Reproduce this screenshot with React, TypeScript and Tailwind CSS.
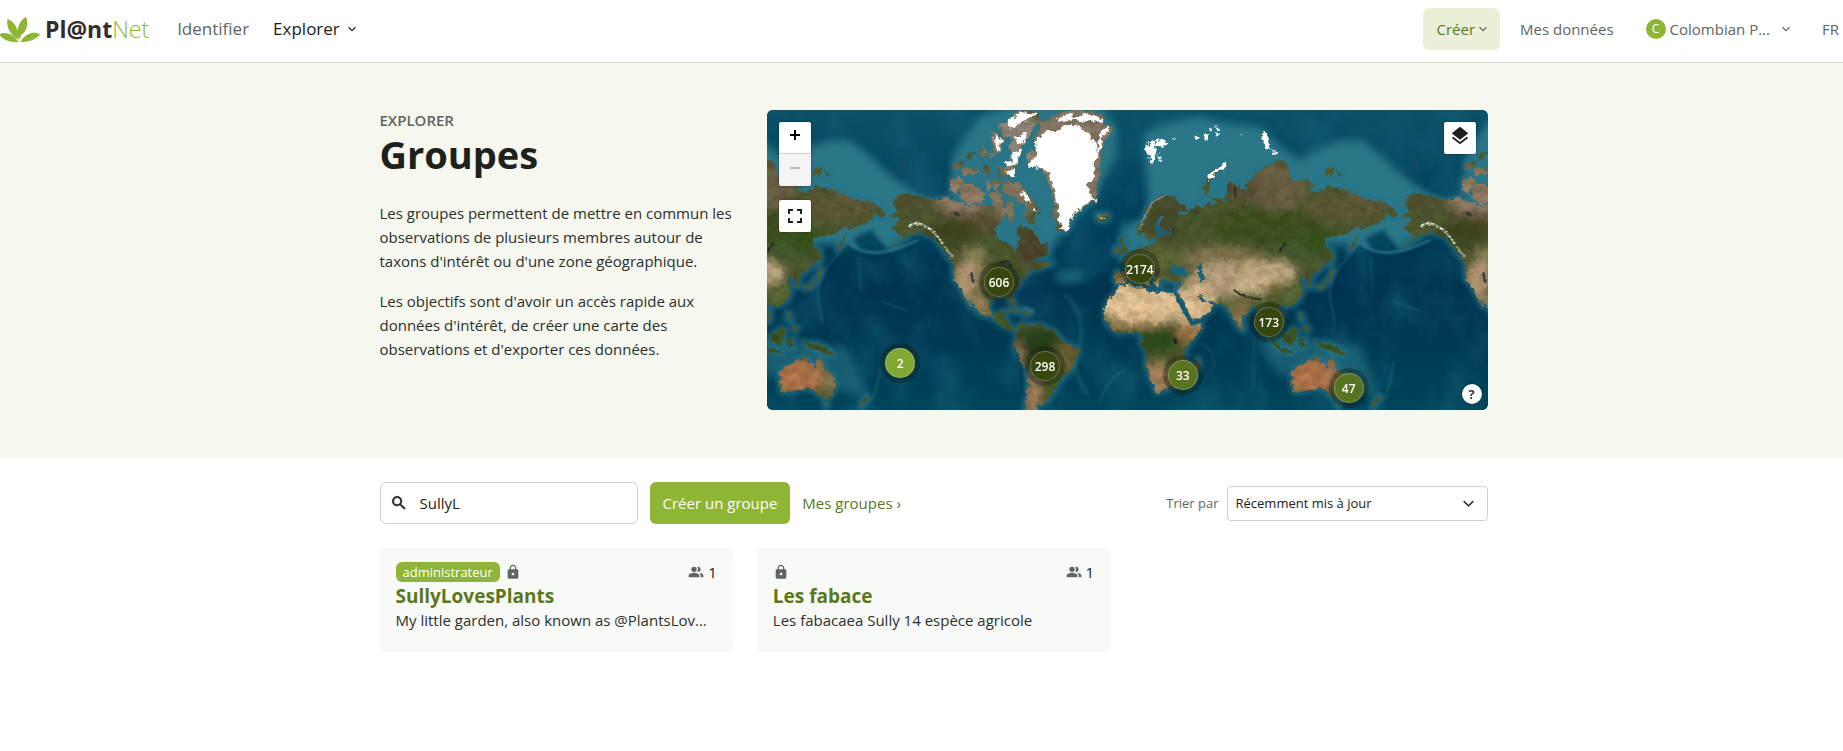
import { useState, type ReactNode } from 'react';

type Cluster = { count: number; x: number; y: number; tone: string };

const MAP_W = 721;
const MAP_H = 300;

const clusters: Cluster[] = [
  { count: 606, x: 232, y: 172, tone: 'bg-[#37450f]' },
  { count: 2174, x: 373, y: 159, tone: 'bg-[#37450f]' },
  { count: 173, x: 502, y: 212, tone: 'bg-[#37450f]' },
  { count: 298, x: 278, y: 256, tone: 'bg-[#37450f]' },
  { count: 33, x: 416, y: 265, tone: 'bg-[#597420]' },
  { count: 47, x: 582, y: 278, tone: 'bg-[#597420]' },
  { count: 2, x: 133, y: 253, tone: 'bg-[#82a733]' },
];

const groups = [
  { name: 'SullyLovesPlants', text: 'My little garden, also known as @PlantsLov...', admin: true, members: 1 },
  { name: 'Les fabace', text: 'Les fabacaea Sully 14 espèce agricole', admin: false, members: 1 },
];

function Chevron({ className }: { className: string }) {
  return (
    <svg viewBox="0 0 16 16" className={className} fill="none" stroke="currentColor" strokeWidth="2.4" aria-hidden="true">
      <path d="M1 4.5 8 11.5l7-7" />
    </svg>
  );
}

function LockIcon() {
  return (
    <svg viewBox="0 0 24 24" className="size-4 text-[#5f655f]" fill="currentColor" aria-hidden="true">
      <path d="M18 8h-1V6c0-2.76-2.24-5-5-5S7 3.24 7 6v2H6c-1.1 0-2 .9-2 2v10c0 1.1.9 2 2 2h12c1.1 0 2-.9 2-2V10c0-1.1-.9-2-2-2zm-6 9c-1.1 0-2-.9-2-2s.9-2 2-2 2 .9 2 2-.9 2-2 2zm3.1-9H8.9V6c0-1.71 1.39-3.1 3.1-3.1 1.71 0 3.1 1.39 3.1 3.1v2z" />
    </svg>
  );
}

function PeopleIcon() {
  return (
    <svg viewBox="0 0 24 24" className="size-4 text-[#5f655f]" fill="currentColor" aria-hidden="true">
      <path d="M16.67 13.13C18.04 14.06 19 15.32 19 17v3h4v-3c0-2.18-3.57-3.47-6.33-3.87z" />
      <circle cx="9" cy="8" r="4" />
      <path d="M15 12c2.21 0 4-1.79 4-4s-1.79-4-4-4c-.47 0-.91.1-1.33.24C14.5 5.27 15 6.58 15 8s-.5 2.73-1.33 3.76c.42.14.86.24 1.33.24zM9 13c-2.67 0-8 1.34-8 4v3h16v-3c0-2.66-5.33-4-8-4z" />
    </svg>
  );
}

function SearchIcon() {
  return (
    <svg viewBox="0 0 24 24" className="size-[18px] shrink-0" fill="currentColor" stroke="currentColor" strokeWidth=".6" aria-hidden="true">
      <path d="M15.5 14h-.79l-.28-.27C15.41 12.59 16 11.11 16 9.5 16 5.91 13.09 3 9.5 3S3 5.91 3 9.5 5.91 16 9.5 16c1.61 0 3.09-.59 4.23-1.57l.27.28v.79l5 4.99L20.49 19l-4.99-5zm-6 0C7.01 14 5 11.99 5 9.5S7.01 5 9.5 5 14 7.01 14 9.5 11.99 14 9.5 14z" />
    </svg>
  );
}

function Logo() {
  return (
    <a href="#accueil" className="flex items-center gap-1" aria-label="Pl@ntNet">
      <svg viewBox="0 0 124 82" className="h-[27px] w-[41px]" fill="#8eb533" aria-hidden="true">
        <path d="M22 9C38 14 57 32 56 72 36 61 18 40 22 9z" />
        <path d="M79 2C85 22 83 38 73 50 66 55 61 62 60 72 52 58 50 47 55 34 58 21 66 9 79 2z" />
        <path d="M0 55C18 46 40 56 56 79 36 82 14 75 0 60z" />
        <path d="M122 56C106 46 78 48 62 79 86 80 106 72 122 56z" />
      </svg>
      <span className="text-[23px] leading-8 font-bold text-[#332b2d]">
        Pl@nt<span className="font-light text-[#8eb533]">Net</span>
      </span>
    </a>
  );
}

const northAmerica =
  'M398 312 415 285 440 280 480 290 520 300 560 292 590 305 620 318 660 315 700 322 740 325 735 350 715 375 705 400 712 420 740 425 755 440 765 462 773 440 778 420 770 395 780 375 800 385 825 395 835 415 865 440 870 460 840 475 820 490 852 482 880 488 845 505 815 510 800 525 785 540 775 560 757 575 760 595 767 622 756 612 745 592 725 588 700 595 690 605 688 630 700 645 720 640 728 630 737 640 728 655 745 660 748 675 765 688 758 692 735 680 700 655 660 640 650 622 625 592 612 570 640 622 632 620 600 562 583 540 580 515 582 490 560 465 545 440 520 410 490 400 460 397 435 418 390 440 440 408 410 400 400 375 415 355 392 348 415 335Z';
const southAmerica =
  'M770 690 785 672 810 675 840 675 870 685 890 695 900 715 925 735 955 745 958 760 940 790 935 815 915 830 895 850 880 880 860 905 835 915 830 940 795 940 800 880 805 840 800 805 785 785 768 755 762 735 770 715 775 700Z';
const caribbean = 'M735 632 760 626 785 632 780 638 755 636ZM790 634 812 637 806 644 790 642Z';
const arcticIslands =
  'M178 65 200 50 235 20 270 18 300 28 305 45 285 70 270 95 250 120 240 150 232 182 215 185 220 150 205 130 215 100 190 95ZM160 78 180 95 190 120 185 145 165 140 155 110ZM185 235 210 228 240 235 262 265 280 285 300 320 285 330 290 362 262 350 250 330 268 312 242 288 215 270 190 265ZM65 242 100 235 122 255 137 268 130 290 90 300 60 280ZM35 220 70 220 72 235 50 268 33 255ZM118 128 132 126 143 150 132 155 120 142ZM148 140 160 142 163 160 150 155ZM42 178 60 165 74 170 68 185 48 195ZM80 150 98 138 98 162 84 165ZM66 192 112 188 116 205 80 212 66 204ZM130 182 148 180 152 208 136 210ZM172 186 218 182 228 200 222 216 178 214ZM135 225 152 230 154 256 138 260ZM158 225 182 228 176 255 160 250ZM152 260 178 258 190 290 186 310 160 305ZM198 290 220 292 222 345 208 355 200 330ZM35 288 75 292 78 305 40 302Z';
const arcticIce =
  'M205 48 245 22 290 26 262 45 235 60 215 72ZM225 95 262 84 252 112 236 120ZM218 140 246 132 234 178 220 172ZM165 90 182 100 184 140 170 130ZM200 198 226 196 226 212 204 214ZM246 258 262 272 276 292 262 288 248 272ZM275 305 296 318 285 322ZM188 172 214 168 230 178 205 184Z';
const greenland =
  'M258 150 290 130 280 100 300 75 305 50 330 45 350 30 380 18 420 18 460 20 485 30 492 60 515 65 517 80 490 110 485 150 480 215 475 240 470 270 465 290 440 300 400 330 385 375 375 382 355 370 340 320 345 290 325 225 300 185 270 185 260 165Z';
const greenlandIce =
  'M285 105 322 78 350 78 382 60 412 60 450 85 467 110 473 150 462 180 466 215 445 235 448 260 467 285 435 300 402 325 385 372 376 380 360 358 352 300 340 240 325 205 305 185 270 190 267 175 292 152ZM350 40 390 26 410 38 440 24 482 36 486 56 455 45 430 50 400 42 370 52ZM488 72 512 66 505 82 484 98 482 140 472 150 476 110Z';
const iceland = 'M470 325 482 328 505 324 509 340 490 352 472 342Z';
const eurasia =
  'M-12 515 -14 548 -5 554 15 550 24 538 30 530 45 528 62 535 85 560 92 552 72 525 95 530 105 548 118 560 125 555 118 540 140 535 155 545 178 545 182 552 175 578 195 610 212 645 220 662 250 650 275 630 281 615 262 605 250 610 238 595 230 583 245 590 260 605 290 608 315 612 325 630 340 650 358 682 366 686 370 655 374 645 395 625 410 618 420 635 435 650 440 680 455 700 467 713 462 690 450 660 470 670 487 665 491 640 480 628 490 618 520 615 540 600 550 575 545 550 538 540 555 530 565 545 568 562 580 560 572 540 590 520 612 500 632 475 636 450 615 440 610 415 640 410 680 400 710 385 728 380 715 410 700 440 690 455 696 422 720 398 745 378 770 372 795 355 800 335 830 357 836 345 820 325 780 305 740 300 700 280 660 265 620 260 590 278 570 270 580 255 555 240 512 240 510 200 480 180 450 195 400 225 395 240 375 255 380 275 345 248 320 255 318 300 275 292 290 308 250 315 235 320 215 325 200 342 182 345 175 330 200 335 195 315 170 305 155 285 125 285 100 300 80 330 75 355 50 380 55 405 75 400 85 428 100 420 112 395 104 375 125 345 132 350 120 375 130 395 162 390 150 402 118 405 110 430 80 438 60 445 40 452 22 470 5 482 25 490 22 515Z';
const seas =
  'M148 510 162 498 175 502 184 496 206 515 198 528 160 526ZM232 498 252 490 247 508 259 540 246 552 236 534 240 515ZM158 545 180 545 175 578 162 572Z';
const africa =
  'M178 232 205 225 250 225 258 240 285 250 305 240 345 252 352 262 358 285 375 310 395 340 405 345 427 340 425 352 400 390 380 410 375 430 385 455 370 490 350 520 320 540 290 548 284 530 270 500 258 465 262 430 245 400 248 380 235 368 200 365 175 370 150 350 138 335 135 300 145 275 165 250Z';
const britain = 'M180 85 195 82 190 100 206 122 195 130 178 132 186 112ZM164 115 176 110 178 126 166 132ZM415 445 421 460 406 496 399 480ZM546 350 554 352 552 364Z';
const eastIslands =
  'M440 700 465 720 485 742 478 746 455 722ZM474 746 522 753 520 760 478 753ZM490 705 515 688 532 690 530 715 515 735 495 727ZM538 720 560 716 548 724 560 742 550 738 542 745ZM586 724 602 730 620 728 650 740 678 764 650 760 625 752 602 742ZM540 640 550 645 548 662 540 658ZM558 675 570 685 564 694 555 686ZM638 505 644 512 636 535 612 562 590 566 612 548 628 528ZM632 450 638 448 641 482 636 498ZM775 888 788 895 772 910 756 928 764 905ZM650 910 662 912 655 924Z';
const australia =
  'M513 820 525 805 545 795 570 780 590 772 605 775 600 790 625 800 635 770 645 785 655 810 680 835 683 860 670 890 655 897 640 890 620 870 605 866 580 865 545 875 522 875 518 850Z';
const novaya = 'M250 265 262 235 290 205 320 190 322 198 292 220 272 242 268 275 258 285ZM615 208 640 206 642 224 620 228ZM650 216 668 222 660 228Z';
const polarIce =
  'M73 135 88 128 84 140 100 125 112 135 106 158 102 190 94 190 88 165 78 158ZM106 122 125 116 144 126 130 140 112 136ZM118 158 128 180 116 176ZM424 100 440 98 450 130 452 148 438 148 430 125ZM455 148 476 158 458 164ZM262 84 278 86 272 96ZM285 96 305 100 290 110ZM225 108 238 104 240 116 226 118ZM250 104 272 102 262 122 252 116ZM268 240 262 250 270 228 292 205 320 190 320 200 290 218ZM288 80 296 78 296 90ZM160 116 170 118 166 124ZM364 100 370 104 364 106Z';

function Blob({ cx, cy, rx, ry, fill, o = 1 }: { cx: number; cy: number; rx: number; ry: number; fill: string; o?: number }) {
  return <ellipse cx={cx} cy={cy} rx={rx} ry={ry} fill={fill} opacity={o} />;
}

function LandShapes() {
  return (
    <>
      <path transform="translate(-21 -30)" d={northAmerica + southAmerica + caribbean} />
      <path transform="translate(519 -15)" d={arcticIslands + iceland} />
      <path transform="translate(519 -15)" d={greenland} />
      <path transform="translate(1059 -30)" d={eurasia} />
      <path transform="translate(1059 -30)" d={eastIslands + australia + novaya} />
      <path transform="translate(879 300)" d={africa + britain} />
    </>
  );
}

function Ocean() {
  return (
    <g id="ocean">
      <g filter="url(#soft30)">
        <path fill="#2c7788" d="M1130 70 1200 40 1300 20 1380 40 1480 50 1540 110 1600 150 1660 115 1720 92 1790 95 1850 140 1900 190 1960 235 2030 300 1900 420 1700 400 1150 330Z" />
        <path fill="#2c7788" d="M560 130 640 20 760 -20 1000 -10 1050 60 1045 150 1000 220 940 300 850 420 700 430 560 300Z" />
        <path fill="#2c7788" d="M1060 350 1130 330 1180 420 1080 440Z" />
        <path fill="#256f84" d="M1470 690 1780 710 1840 860 1750 840 1640 760 1540 800Z" opacity=".6" />
        <ellipse cx="910" cy="500" rx="50" ry="20" fill="#256f84" opacity=".7" />
      </g>
      <g filter="url(#soft10)" stroke="#2b7487" strokeWidth="20" strokeLinejoin="round" fill="#2b7487" opacity=".65">
        <LandShapes />
      </g>
      <g filter="url(#soft10)">
        <path fill="#00405a" d="M1795 385 1850 360 1905 425 1830 432Z" opacity=".9" />
        <path fill="#0a4a63" d="M1920 130 1950 120 1965 170 1940 210 1922 190Z" opacity=".7" />
      </g>
      <g filter="url(#soft4)" fill="none" stroke="#3a8698" strokeLinecap="round">
        <path d="M1786 400Q1850 460 1990 390" strokeWidth="5" />
        <path d="M1770 410Q1710 480 1695 500L1690 560 1705 640" strokeWidth="4" opacity=".5" />
        <path d="M1812 440 1818 540M1880 575 1958 602" strokeWidth="4" opacity=".4" />
        <path d="M1884 755 1858 860" strokeWidth="4" opacity=".5" />
        <path d="M1310 700Q1370 750 1320 800M1462 640 1460 840" strokeWidth="4" opacity=".35" />
        <path d="M900 560Q960 620 940 700Q900 760 960 850" strokeWidth="18" opacity=".18" />
        <path d="M1080 780Q1020 800 1000 880" strokeWidth="6" opacity=".3" />
        <path d="M770 590 800 605" strokeWidth="6" opacity=".8" />
      </g>
      <g filter="url(#soft4)" fill="none" stroke="#002f49" strokeLinecap="round" opacity=".7">
        <path d="M1778 412Q1850 474 1985 404M1778 412Q1705 490 1700 560L1716 650" strokeWidth="4" />
        <path d="M740 690 765 780 770 860" strokeWidth="6" />
      </g>
    </g>
  );
}

function Land() {
  return (
    <g id="land">
      <g filter="url(#coast)">
        <g clipPath="url(#landclip)">
          <rect x="-60" y="-40" width="2300" height="1000" fill="#4f5a31" />
          <g filter="url(#soft20)">
            {/* North America */}
            <Blob cx={420} cy={285} rx={70} ry={30} fill="#535431" />
            <Blob cx={620} cy={325} rx={110} ry={40} fill="#5c5538" />
            <Blob cx={560} cy={370} rx={80} ry={40} fill="#3f4a22" />
            <Blob cx={640} cy={410} rx={60} ry={24} fill="#47582a" />
            <Blob cx={625} cy={450} rx={36} ry={45} fill="#8c8559" />
            <Blob cx={600} cy={510} rx={38} ry={60} fill="#b79a75" />
            <Blob cx={720} cy={510} rx={50} ry={50} fill="#3c5123" />
            <Blob cx={640} cy={590} rx={30} ry={30} fill="#a88c63" />
            <Blob cx={710} cy={630} rx={35} ry={20} fill="#3f5a22" />
            <Blob cx={800} cy={410} rx={50} ry={60} fill="#50472e" />
            <Blob cx={590} cy={240} rx={100} ry={70} fill="#957f6a" />
            <Blob cx={740} cy={260} rx={60} ry={80} fill="#8a7a65" />
            <Blob cx={740} cy={90} rx={100} ry={90} fill="#968a7c" />
            <Blob cx={930} cy={150} rx={130} ry={200} fill="#8b7d6b" />
            {/* South America */}
            <Blob cx={810} cy={700} rx={80} ry={45} fill="#25431a" />
            <Blob cx={900} cy={740} rx={40} ry={50} fill="#6a6433" />
            <Blob cx={860} cy={830} rx={45} ry={40} fill="#4a5c26" />
            <Blob cx={800} cy={860} rx={24} ry={70} fill="#a98464" />
            <Blob cx={755} cy={740} rx={14} ry={50} fill="#9a7c55" />
            {/* Europe and Asia */}
            <Blob cx={1220} cy={330} rx={90} ry={60} fill="#474e2f" />
            <Blob cx={1330} cy={350} rx={120} ry={50} fill="#48592e" />
            <Blob cx={1500} cy={350} rx={160} ry={60} fill="#405222" />
            <Blob cx={1530} cy={230} rx={90} ry={70} fill="#6e6347" />
            <Blob cx={1740} cy={290} rx={130} ry={45} fill="#5f5c39" />
            <Blob cx={1430} cy={240} rx={50} ry={40} fill="#5b5035" />
            <Blob cx={1180} cy={450} rx={90} ry={40} fill="#5d6635" />
            <Blob cx={1360} cy={440} rx={120} ry={28} fill="#8b7d57" />
            <Blob cx={1370} cy={510} rx={110} ry={50} fill="#bda582" />
            <Blob cx={1500} cy={490} rx={90} ry={42} fill="#cbb28a" />
            <Blob cx={1470} cy={535} rx={70} ry={20} fill="#d2bb93" />
            <Blob cx={1610} cy={420} rx={70} ry={40} fill="#455c2d" />
            <Blob cx={1660} cy={390} rx={50} ry={40} fill="#37551f" />
            <Blob cx={1570} cy={550} rx={40} ry={40} fill="#5c6a38" />
            <Blob cx={1520} cy={535} rx={24} ry={18} fill="#71631f" />
            <Blob cx={1420} cy={600} rx={40} ry={40} fill="#7d7347" />
            <Blob cx={1415} cy={640} rx={22} ry={30} fill="#9a7750" />
            <Blob cx={1500} cy={620} rx={50} ry={40} fill="#3e5a24" />
            <Blob cx={1280} cy={590} rx={70} ry={60} fill="#e6c495" />
            <Blob cx={1070} cy={510} rx={30} ry={20} fill="#92794d" />
            {/* Africa */}
            <Blob cx={1130} cy={580} rx={140} ry={62} fill="#edcb9c" />
            <Blob cx={1100} cy={645} rx={100} ry={12} fill="#a18050" />
            <Blob cx={1060} cy={668} rx={60} ry={14} fill="#4a5726" />
            <Blob cx={1175} cy={690} rx={70} ry={38} fill="#2f501a" />
            <Blob cx={1270} cy={670} rx={40} ry={34} fill="#a3794a" />
            <Blob cx={1190} cy={760} rx={60} ry={30} fill="#55602d" />
            <Blob cx={1170} cy={810} rx={50} ry={50} fill="#ac8860" />
            <Blob cx={1230} cy={800} rx={30} ry={40} fill="#65633a" />
            <Blob cx={1290} cy={770} rx={14} ry={30} fill="#6d4d2b" />
            {/* Oceania */}
            <Blob cx={1570} cy={700} rx={90} ry={50} fill="#39551f" />
            <Blob cx={1700} cy={715} rx={60} ry={30} fill="#37521c" />
            <Blob cx={1630} cy={800} rx={75} ry={50} fill="#bd7a50" />
            <Blob cx={1690} cy={770} rx={28} ry={30} fill="#9b7550" />
            <Blob cx={1730} cy={825} rx={30} ry={50} fill="#8b7a52" />
            <Blob cx={1725} cy={860} rx={24} ry={14} fill="#5a6132" />
          </g>
          <rect x="-60" y="-40" width="2300" height="1000" filter="url(#grain)" opacity=".22" />
        </g>
        <path fill="#fff" transform="translate(519 -15)" d={arcticIce + greenlandIce + 'M486 340 500 338 496 347Z'} />
        <path fill="#fff" transform="translate(1059 -30)" d={polarIce} />
        <path fill="#1c6478" transform="translate(1059 -30)" d={seas} />
      </g>
      <g filter="url(#rough)" fill="none" strokeLinecap="round">
        <path transform="translate(-21 -30)" d="M450 378Q470 362 500 380T548 430" stroke="#f3f3ee" strokeWidth="6" strokeDasharray="10 9 3 8" />
        <path transform="translate(-21 -30)" d="M555 440 580 470" stroke="#d9d5c8" strokeWidth="4" strokeDasharray="6 5" />
        <path transform="translate(-21 -30)" d="M722 488 745 484 755 498M585 340 602 346M640 545 636 520" stroke="#1a2638" strokeWidth="6" />
        <path transform="translate(1059 -30)" d="M345 570Q370 595 425 598" stroke="#33381f" strokeWidth="6" />
        <path transform="translate(1059 -30)" d="M480 455 495 432M160 392 162 384M346 262 348 290" stroke="#1d2a2c" strokeWidth="5" />
        <path transform="translate(1059 -30)" d="M60 385 78 345 100 305 130 290" stroke="#9b9c93" strokeWidth="5" strokeDasharray="4 6" />
        <path transform="translate(879 300)" d="M352 262 395 340 430 333" stroke="#14586f" strokeWidth="9" />
        <path transform="translate(879 300)" d="M346 392 348 398" stroke="#17221c" strokeWidth="9" />
      </g>
    </g>
  );
}

function WorldImagery() {
  return (
    <svg viewBox="0 0 2163 900" preserveAspectRatio="xMidYMid slice" className="absolute inset-0 size-full" aria-hidden="true">
      <defs>
        <filter id="soft30" x="-10%" y="-20%" width="120%" height="140%"><feGaussianBlur stdDeviation="13" /></filter>
        <filter id="soft20" x="-10%" y="-10%" width="120%" height="120%"><feGaussianBlur stdDeviation="13" /></filter>
        <filter id="soft10" x="-10%" y="-10%" width="120%" height="120%"><feGaussianBlur stdDeviation="6" /></filter>
        <filter id="soft4" x="-10%" y="-10%" width="120%" height="120%"><feGaussianBlur stdDeviation="2.5" /></filter>
        <filter id="coast" x="-5%" y="-5%" width="110%" height="110%">
          <feTurbulence type="fractalNoise" baseFrequency="0.06" numOctaves="3" seed="4" result="n" />
          <feDisplacementMap in="SourceGraphic" in2="n" scale="22" xChannelSelector="R" yChannelSelector="G" />
        </filter>
        <filter id="rough" x="-5%" y="-5%" width="110%" height="110%">
          <feTurbulence type="fractalNoise" baseFrequency="0.1" numOctaves="2" seed="9" result="n" />
          <feDisplacementMap in="SourceGraphic" in2="n" scale="10" xChannelSelector="R" yChannelSelector="G" />
        </filter>
        <filter id="grain" x="0" y="0" width="100%" height="100%" colorInterpolationFilters="sRGB">
          <feTurbulence type="fractalNoise" baseFrequency="0.03 0.04" numOctaves="5" seed="12" />
          <feColorMatrix values="0 0 0 0 0.15  0 0 0 0 0.12  0 0 0 0 0.04  0 2.2 0 0 -0.7" />
        </filter>
        <filter id="swell" x="0" y="0" width="100%" height="100%" colorInterpolationFilters="sRGB">
          <feTurbulence type="fractalNoise" baseFrequency="0.008 0.006" numOctaves="5" seed="31" />
          <feColorMatrix values="0 0 0 0 0.12  0 0 0 0 0.42  0 0 0 0 0.52  2.4 0 0 0 -1" />
        </filter>
        <linearGradient id="depth" x1="0" y1="0" x2="0" y2="1">
          <stop offset="0" stopColor="#0a5168" />
          <stop offset=".4" stopColor="#003e5a" />
          <stop offset=".6" stopColor="#00334f" />
          <stop offset="1" stopColor="#00445a" />
        </linearGradient>
        <clipPath id="landclip">
          <path transform="translate(-21 -30)" d={northAmerica + southAmerica + caribbean} />
          <path transform="translate(519 -15)" d={arcticIslands + iceland + greenland} />
          <path transform="translate(1059 -30)" d={eurasia} />
          <path transform="translate(1059 -30)" d={eastIslands + australia + novaya} />
          <path transform="translate(879 300)" d={africa + britain} />
        </clipPath>
      </defs>
      <rect width="2163" height="900" fill="url(#depth)" />
      <rect width="2163" height="900" filter="url(#swell)" opacity=".4" />
      <Ocean />
      <use href="#ocean" x="-1536" />
      <use href="#ocean" x="1536" />
      <Land />
      <use href="#land" x="-1536" />
      <use href="#land" x="1536" />
    </svg>
  );
}

function MapButton({ label, className, children }: { label: string; className: string; children: ReactNode }) {
  return (
    <button type="button" aria-label={label} className={`flex size-8 items-center justify-center ${className}`}>
      {children}
    </button>
  );
}

function GroupsMap() {
  return (
    <div className="relative h-[300px] w-[65%] shrink-0 overflow-hidden rounded-md bg-[#00415a]">
      <WorldImagery />
      {clusters.map((c) => (
        <button
          key={c.count}
          type="button"
          style={{ left: `${(c.x / MAP_W) * 100}%`, top: `${(c.y / MAP_H) * 100}%` }}
          className={`absolute flex size-[30px] -translate-x-1/2 -translate-y-1/2 items-center justify-center rounded-full border border-white/25 pt-[2px] text-[12px] font-semibold text-white shadow-[0_0_0_5px_rgba(20,25,15,0.35)] ${c.tone}`}
        >
          {c.count}
        </button>
      ))}
      <div className="absolute top-3 left-3 flex flex-col gap-[14px]">
        <div className="flex flex-col overflow-hidden rounded-xs shadow-[0_0_2px_rgba(0,0,0,0.5)]">
          <MapButton label="Zoom avant" className="border-b border-[#ccc] bg-white pb-[5px] text-black">
            <svg viewBox="0 0 10 10" className="size-[10px]" stroke="currentColor" strokeWidth="2" aria-hidden="true"><path d="M5 0v10M0 5h10" /></svg>
          </MapButton>
          <MapButton label="Zoom arrière" className="bg-[#f4f4f4] pb-[5px] text-[#bbb]">
            <svg viewBox="0 0 10 10" className="size-[10px]" stroke="currentColor" strokeWidth="2" aria-hidden="true"><path d="M0 5h10" /></svg>
          </MapButton>
        </div>
        <MapButton label="Plein écran" className="rounded-xs bg-white text-[#1d211c] shadow-[0_0_2px_rgba(0,0,0,0.5)]">
          <svg viewBox="0 0 14 14" className="size-[14px]" fill="none" stroke="currentColor" strokeWidth="2" aria-hidden="true">
            <path d="M5 1H1v4M9 1h4v4M5 13H1V9M9 13h4V9" />
          </svg>
        </MapButton>
      </div>
      <div className="absolute top-3 right-3">
        <MapButton label="Fonds de carte" className="rounded-xs bg-white text-[#1d211c] shadow-[0_0_2px_rgba(0,0,0,0.5)]">
          <svg viewBox="0 0 24 24" className="mb-1 size-[22px]" fill="currentColor" aria-hidden="true">
            <path d="m11.99 18.54-7.37-5.73L3 14.07l9 7 9-7-1.63-1.27-7.38 5.74zM12 16l7.36-5.73L21 9l-9-7-9 7 1.63 1.27L12 16z" />
          </svg>
        </MapButton>
      </div>
      <button type="button" aria-label="Aide" className="absolute right-[6px] bottom-[6px] flex size-5 items-center justify-center rounded-full bg-white text-[13px] font-bold text-[#333] shadow-[0_0_2px_rgba(0,0,0,0.5)]">
        ?
      </button>
    </div>
  );
}

function Header() {
  return (
    <header className="flex h-[63px] items-start justify-between border-b border-[#d9dbd3] bg-white pt-2">
      <div className="flex h-[42px] items-center">
        <Logo />
        <nav className="ml-7 flex items-center gap-6 text-[17px]">
          <a href="#identifier" className="text-[#5f655f]">Identifier</a>
          <a href="#explorer" className="flex items-center gap-2 text-[#1d211c]">
            Explorer <Chevron className="size-2" />
          </a>
        </nav>
      </div>
      <div className="flex h-[42px] items-center text-[15px] text-[#5f655f]">
        <button type="button" className="flex h-full items-center gap-1 rounded-md bg-[#ebf0d9] px-[13px] text-[#5c771c]">
          Créer <Chevron className="size-2 text-[#5f655f]" />
        </button>
        <a href="#donnees" className="ml-5">Mes données</a>
        <button type="button" className="ml-8 flex items-center">
          <span className="mr-1 flex size-5 items-center justify-center rounded-full bg-[#8eb533] text-xs text-white">C</span>
          Colombian P...
          <Chevron className="ml-3 size-2" />
        </button>
        <button type="button" className="ml-8 flex items-center gap-2 pr-3">
          FR <Chevron className="size-2" />
        </button>
      </div>
    </header>
  );
}

export default function App() {
  const [query, setQuery] = useState('SullyL');
  return (
    <div className="min-h-screen overflow-x-clip bg-white font-['Open_Sans','Noto_Sans',sans-serif] text-[15px] leading-6 text-[#2b302a]">
      <div className="-mr-6">
        <Header />
        <section className="bg-[#f6f7ee] pt-[47px] pb-12">
          <div className="mx-auto flex w-full max-w-[1108px] justify-between gap-6">
            <div className="min-w-0 flex-1">
              <p className="leading-5 font-semibold text-[#5f655f]">EXPLORER</p>
              <h1 className="text-[38px] leading-12 font-bold text-[#1d211c]">Groupes</h1>
              <p className="mt-[23px]">
                Les groupes permettent de mettre en commun les observations de plusieurs membres autour de taxons d'intérêt ou d'une zone géographique.
              </p>
              <p className="mt-4">
                Les objectifs sont d'avoir un accès rapide aux données d'intérêt, de créer une carte des observations et d'exporter ces données.
              </p>
            </div>
            <GroupsMap />
          </div>
        </section>
        <main className="mx-auto w-full max-w-[1108px] py-6">
          <div className="flex items-center gap-3">
            <label className="flex h-[42px] w-[258px] items-center gap-3 rounded-md border border-[#ced0cd] px-[9px] text-[#1d211c]">
              <SearchIcon />
              <span className="sr-only">Rechercher un groupe</span>
              <input value={query} onChange={(e) => setQuery(e.target.value)} className="h-6 w-full min-w-0 outline-none" />
            </label>
            <button type="button" className="h-[42px] rounded-md bg-[#8eb533] px-[13px] font-medium text-white">Créer un groupe</button>
            <a href="#mes-groupes" className="text-[#5c771c]">Mes groupes ›</a>
            <div className="ml-auto flex items-center gap-2 text-[13px]">
              <label htmlFor="sort" className="text-[#5f655f]">Trier par</label>
              <div className="relative w-[261px]">
                <select id="sort" className="h-[35px] w-full appearance-none rounded-sm border border-[#ced0cd] bg-white px-2 text-[#1d211c]">
                  <option>Récemment mis à jour</option>
                </select>
                <Chevron className="pointer-events-none absolute top-3 right-[14px] size-[11px] text-[#343a40]" />
              </div>
            </div>
          </div>
          <ul className="mt-6 grid grid-cols-3 gap-6">
            {groups.map((g) => (
              <li key={g.name} className="h-[104px] rounded-md bg-[#f8faf8] px-4 pt-3">
                <div className="flex h-6 items-center gap-1">
                  {g.admin && (
                    <span className="mr-[1px] h-5 rounded-md bg-[#8eb533] px-[7px] text-[13px] leading-5 font-medium text-white">administrateur</span>
                  )}
                  <LockIcon />
                  <span className="ml-auto flex items-center gap-1 text-[#1d211c]">
                    <PeopleIcon />
                    {g.members}
                  </span>
                </div>
                <h2 className="text-[19px] leading-6 font-bold">
                  <a href="#groupe" className="text-[#5c771c]">{g.name}</a>
                </h2>
                <p className="truncate">{g.text}</p>
              </li>
            ))}
          </ul>
        </main>
      </div>
    </div>
  );
}
